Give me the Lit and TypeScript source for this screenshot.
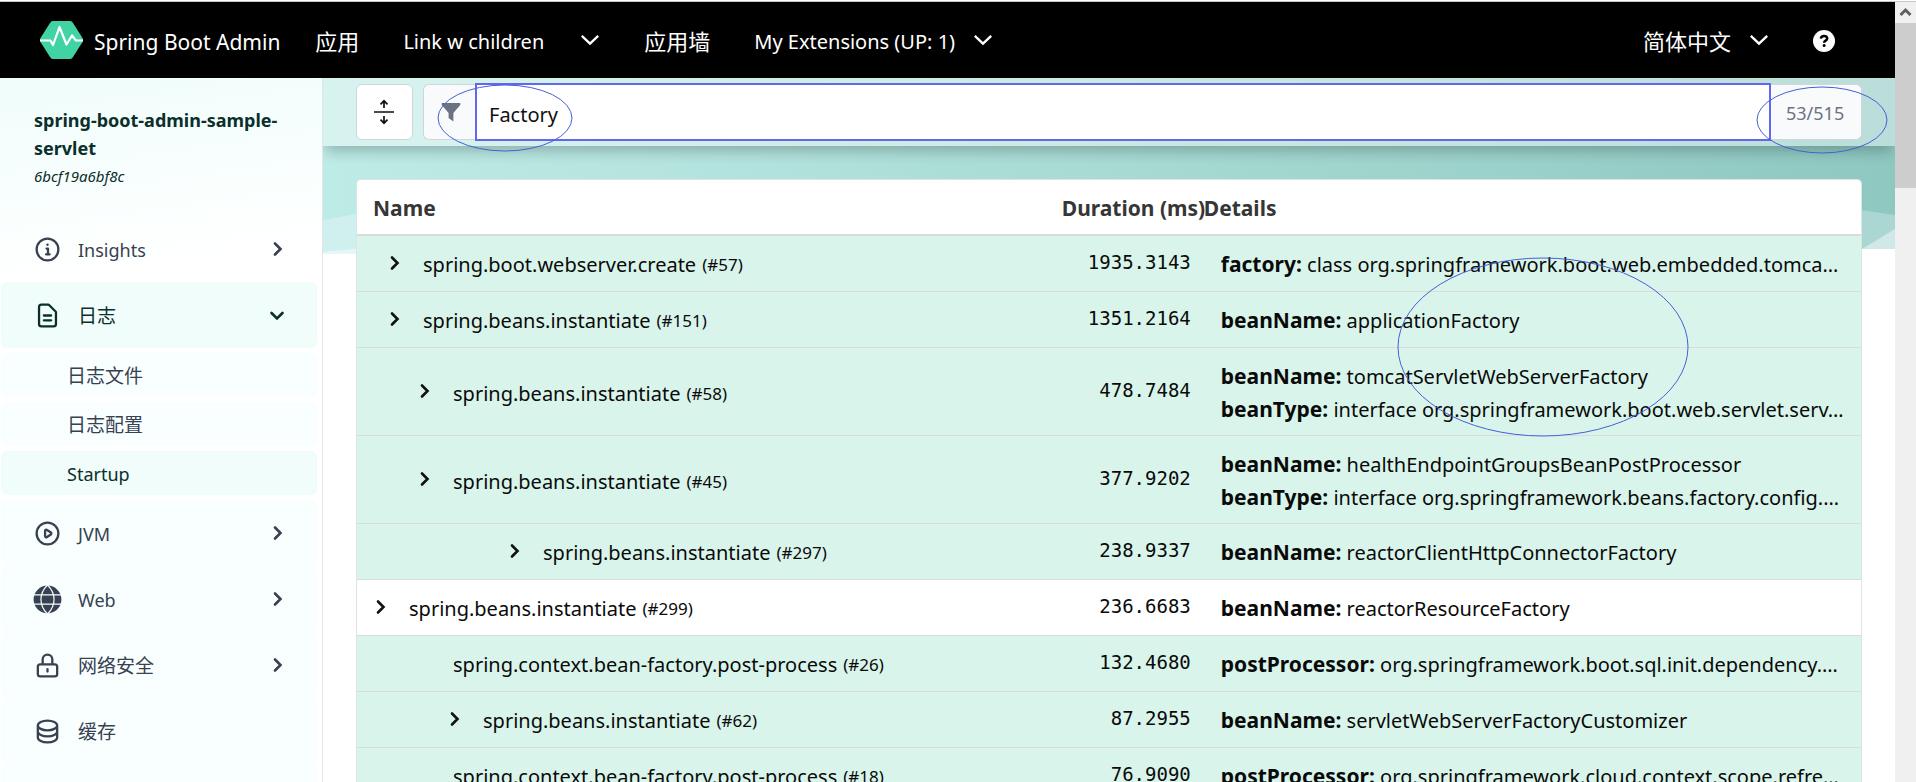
import { LitElement, html, css, svg, nothing } from "lit";
import { customElement, property, state } from "lit/decorators.js";
import { classMap } from "lit/directives/class-map.js";
import { styleMap } from "lit/directives/style-map.js";

interface Detail { key: string; value: string; }
interface Step {
  id: number; name: string; duration: string; indent: number;
  leaf?: boolean; plain?: boolean; details: Detail[];
}

const STEPS: Step[] = [
  { id: 57, name: "spring.boot.webserver.create", duration: "1935.3143", indent: 14,
    details: [{ key: "factory", value: "class org.springframework.boot.web.embedded.tomca…" }] },
  { id: 151, name: "spring.beans.instantiate", duration: "1351.2164", indent: 14,
    details: [{ key: "beanName", value: "applicationFactory" }] },
  { id: 58, name: "spring.beans.instantiate", duration: "478.7484", indent: 44,
    details: [{ key: "beanName", value: "tomcatServletWebServerFactory" },
      { key: "beanType", value: "interface org.springframework.boot.web.servlet.serv…" }] },
  { id: 45, name: "spring.beans.instantiate", duration: "377.9202", indent: 44,
    details: [{ key: "beanName", value: "healthEndpointGroupsBeanPostProcessor" },
      { key: "beanType", value: "interface org.springframework.beans.factory.config.…" }] },
  { id: 297, name: "spring.beans.instantiate", duration: "238.9337", indent: 134,
    details: [{ key: "beanName", value: "reactorClientHttpConnectorFactory" }] },
  { id: 299, name: "spring.beans.instantiate", duration: "236.6683", indent: 0, plain: true,
    details: [{ key: "beanName", value: "reactorResourceFactory" }] },
  { id: 26, name: "spring.context.bean-factory.post-process", duration: "132.4680", indent: 79, leaf: true,
    details: [{ key: "postProcessor", value: "org.springframework.boot.sql.init.dependency.…" }] },
  { id: 62, name: "spring.beans.instantiate", duration: "87.2955", indent: 74,
    details: [{ key: "beanName", value: "servletWebServerFactoryCustomizer" }] },
  { id: 18, name: "spring.context.bean-factory.post-process", duration: "76.9090", indent: 79, leaf: true,
    details: [{ key: "postProcessor", value: "org.springframework.cloud.context.scope.refre…" }] },
];

const chevron = html`<svg class="chev" viewBox="0 0 20 20" aria-hidden="true"><path d="M7 4.5 12.5 10 7 15.5" /></svg>`;
const caret = html`<svg class="caret" viewBox="0 0 22 12" aria-hidden="true"><path d="M2 1.5 11 10 20 1.5" /></svg>`;

const icons: Record<string, unknown> = {
  info: svg`<circle cx="12" cy="12" r="9"/><path d="M11.2 11.2h1.2v4.8M10.8 16h3"/><circle class="fill" cx="12" cy="8" r="1"/>`,
  doc: svg`<path d="M9 12h6m-6 4h6m2 5H7a2 2 0 01-2-2V5a2 2 0 012-2h5.6a1 1 0 01.7.3l5.4 5.4a1 1 0 01.3.7V19a2 2 0 01-2 2z"/>`,
  play: svg`<circle cx="12" cy="12" r="9"/><path d="M14.8 11.2l-3.2-2.1A1 1 0 0010 9.9v4.2a1 1 0 001.6.8l3.2-2.1a1 1 0 000-1.6z"/>`,
  globe: svg`<circle class="fill" cx="12" cy="12" r="11.5"/><path class="cut" d="M0 8.2h24M0 15.8h24M12 0c-7.2 7-7.2 17 0 24M12 0c7.2 7 7.2 17 0 24"/>`,
  lock: svg`<path d="M12 15v2m-6 4h12a2 2 0 002-2v-6a2 2 0 00-2-2H6a2 2 0 00-2 2v6a2 2 0 002 2zm10-10V7a4 4 0 00-8 0v4h8z"/>`,
  db: svg`<path d="M4 7v10c0 2.2 3.6 4 8 4s8-1.8 8-4V7M4 7c0 2.2 3.6 4 8 4s8-1.8 8-4M4 7c0-2.2 3.6-4 8-4s8 1.8 8 4m0 5c0 2.2-3.6 4-8 4s-8-1.8-8-4"/>`,
};

const FONT = css`"Noto Sans", "Noto Sans CJK SC", sans-serif`;

@customElement("sba-navbar")
class SbaNavbar extends LitElement {
  static styles = css`
    :host { display: block; background: #000; color: #fff; font: 20px/32px ${FONT}; }
    nav { display: flex; align-items: center; height: 76px; padding: 0 57px 0 40px; }
    a, button { color: inherit; font: inherit; text-decoration: none; background: none; border: 0; padding: 0; display: flex; align-items: center; white-space: nowrap; }
    span { padding-top: 3px; }
    .brand { gap: 11px; margin-right: 35px; font-size: 21px; }
    .logo { width: 43px; height: 40px; }
    .item { margin-right: 44px; }
    .zh { font-size: 22px; }
    .zh span { padding-top: 1px; }
    .wide { gap: 36px; }
    .near { gap: 18px; }
    .right { display: flex; align-items: center; margin-left: auto; gap: 41px; }
    .caret { width: 20px; height: 12px; fill: none; stroke: #fff; stroke-width: 2.6; }
    .help { width: 28px; height: 28px; }
  `;
  render() {
    return html`<nav>
      <a class="brand" href="#">
        <svg class="logo" viewBox="0 0 43 40" aria-hidden="true">
          <path fill="#42d3a5" d="M13 1h17q2 0 3 2l9.5 15q1 2 0 4l-9.5 15q-1 2-3 2H13q-2 0-3-2L.5 22q-1-2 0-4L10 3q1-2 3-2z"/>
          <path fill="none" stroke="#fff" stroke-width="2.2" stroke-linejoin="round" d="M0 20.5h10.5l2.5 4.5 6.5-18 7 17.5 5.5-9 4 5h7"/>
        </svg>
        <span>Spring Boot Admin</span></a>
      <a class="item zh" href="#"><span>应用</span></a>
      <button class="item wide"><span>Link w children</span>${caret}</button>
      <a class="item zh" href="#"><span>应用墙</span></a>
      <button class="item near"><span>My Extensions (UP: 1)</span>${caret}</button>
      <div class="right">
        <button class="near zh"><span>简体中文</span>${caret}</button>
        <button aria-label="Help"><svg class="help" viewBox="0 0 28 28" aria-hidden="true">
          <circle cx="14" cy="15" r="11" fill="#fff"/>
          <path d="M10.8 12.6c.3-2 1.5-2.7 3.2-2.7 1.9 0 3.2 1 3.2 2.6 0 2.2-3.1 2.1-3.1 4.2" fill="none" stroke="#000" stroke-width="2.5"/>
          <circle cx="14.1" cy="19.6" r="1.5"/></svg></button>
      </div>
    </nav>`;
  }
}

@customElement("sba-sidebar")
class SbaSidebar extends LitElement {
  static styles = css`
    :host { display: block; box-sizing: border-box; overflow: hidden; border-right: 1px solid #e2e6ea; color: #374151; font: 18px/28px ${FONT};
      background: linear-gradient(172deg, #f0fdfa 0, #f6fefd 90px, #fff 210px); }
    .app { display: block; padding: 28px 28px 26px 34px; color: #0b2f2b; text-decoration: none; }
    .app strong { display: block; }
    .app em { display: block; font-size: 15px; }
    ul { list-style: none; margin: 0; padding: 0 5px 0 1px; }
    .link { display: flex; align-items: center; box-sizing: border-box; height: 66px; padding: 0 30px 0 32px; gap: 16px; border-radius: 6px; background: #f8fffe; color: inherit; text-decoration: none; }
    .link.plain { background: none; }
    .link span { flex: 1; padding-top: 2px; }
    .link.open, .sub.current { background: #f0fdfa; color: #0b2f2b; }
    .zh { font-size: 19px; }
    .sub { display: flex; align-items: center; box-sizing: border-box; height: 44px; margin: 5px 0; padding: 1px 0 0 66px; border-radius: 6px; background: #f8fffe; color: inherit; text-decoration: none; }
    .icon { width: 29px; height: 29px; fill: none; stroke: currentColor; stroke-width: 1.9; stroke-linecap: round; stroke-linejoin: round; }
    .icon .fill { fill: currentColor; stroke: none; }
    .icon .cut { stroke: #f8fffe; stroke-width: 1; }
    .chev { width: 20px; height: 20px; fill: none; stroke: currentColor; stroke-width: 2.6; stroke-linecap: round; }
    .down { transform: rotate(90deg); }
  `;
  private entry(icon: string, label: string, arrow = true, kind = "") {
    return html`<a class="link ${kind}" href="#"><svg class="icon" viewBox="0 0 24 24" aria-hidden="true">${icons[icon]}</svg><span>${label}</span>${
      arrow ? html`<svg class=${kind.includes("open") ? "chev down" : "chev"} viewBox="0 0 20 20" aria-hidden="true"><path d="M8 4.5 13.5 10 8 15.5"/></svg>` : nothing}</a>`;
  }
  render() {
    return html`
      <a class="app" href="#"><strong>spring-boot-admin-sample-servlet</strong><em>6bcf19a6bf8c</em></a>
      <ul>
        <li>${this.entry("info", "Insights", true, "plain")}</li>
        <li>${this.entry("doc", "日志", true, "open zh")}
          <a class="sub zh" href="#">日志文件</a>
          <a class="sub zh" href="#">日志配置</a>
          <a class="sub current" href="#">Startup</a></li>
        <li>${this.entry("play", "JVM")}</li>
        <li>${this.entry("globe", "Web")}</li>
        <li>${this.entry("lock", "网络安全", true, "zh")}</li>
        <li>${this.entry("db", "缓存", false, "zh")}</li>
        <li class="link"></li>
      </ul>`;
  }
}

@customElement("sba-filter-bar")
class SbaFilterBar extends LitElement {
  @state() private query = "Factory";
  static styles = css`
    :host { display: flex; gap: 10px; padding: 5px 33px; font: 20px/32px ${FONT};
      background: rgba(255, 255, 255, .4); box-shadow: 0 8px 13px -3px rgba(0, 0, 0, .24); }
    .expand { width: 57px; height: 56px; margin: 1px 0; padding: 0 2px 0 0; display: grid; place-items: center; background: #fff; border: 1px solid #d1d5db; border-radius: 6px; }
    .expand svg { width: 24px; height: 28px; fill: none; stroke: #111; stroke-width: 1.7; }
    .group { flex: 1; display: flex; align-items: center; }
    .addon { box-sizing: border-box; display: flex; align-items: center; height: 56px; border: 1px solid #d1d5db; background: #f9fafb; color: #6b7280; }
    .addon.left { width: 52px; padding-left: 17px; border-radius: 6px 0 0 6px; border-right: 0; }
    .addon.right { width: 91px; padding: 2px 0 0 15px; font-size: 18px; border-radius: 0 6px 6px 0; border-left: 0; }
    .addon svg { width: 20px; height: 20px; fill: #6b7280; }
    input { flex: 1; min-width: 0; box-sizing: border-box; height: 58px; padding: 4px 12px 0; border: 2px solid #6366f1; background: #fff; color: #111; font: inherit; outline: 0; }
  `;
  render() {
    return html`
      <button class="expand" aria-label="Expand all"><svg viewBox="0 0 24 28" aria-hidden="true"><path d="M2 14h20M12 10V3M8.5 6.3 12 2.8l3.5 3.5M12 18v7M8.5 21.7l3.5 3.5 3.5-3.5"/></svg></button>
      <div class="group">
        <label class="addon left" for="filter" aria-label="Filter"><svg viewBox="0 0 20 20" aria-hidden="true"><path d="M1 1h18q1 1 0 2.2L12.4 11v8.5L7.6 16v-5L1 3.2Q0 2 1 1z"/></svg></label>
        <input id="filter" type="text" .value=${this.query} @input=${(e: Event) => (this.query = (e.target as HTMLInputElement).value)}>
        <span class="addon right">53/515</span>
      </div>`;
  }
}

@customElement("sba-startup-table")
class SbaStartupTable extends LitElement {
  @property({ attribute: false }) steps: Step[] = [];
  static styles = css`
    :host { display: block; border: 1px solid #dbe5e5; border-bottom: 0; border-radius: 5px 5px 0 0; background: #fff; overflow: hidden; font: 20px/33px ${FONT}; color: #0a0a0a; }
    table { width: 100%; table-layout: fixed; border-collapse: separate; border-spacing: 0; }
    .c-duration { width: 142px; }
    .c-details { width: 43.7%; }
    th { height: 52px; padding: 2px 0 0; text-align: left; color: #363636; border-bottom: 2px solid #dbdbdb; white-space: nowrap; line-height: 32px; font-size: 21px; }
    th:first-child { padding-left: 16px; }
    .num { text-align: right; }
    td { padding: 12px 10px 10px 17px; border-bottom: 1px solid #dbdbdb; background: #d9f5eb; }
    .multi td { padding-bottom: 9px; }
    .plain td { background: #fff; }
    td.num, .multi td.num { padding: 9px 13px 12px 0; font: 19px/32px "DejaVu Sans Mono", monospace; }
    .name { display: flex; align-items: center; white-space: nowrap; }
    .toggle { width: 35px; height: 20px; margin-bottom: 4px; padding: 0; border: 0; background: none; display: flex; flex: none; }
    .chev { width: 20px; height: 20px; margin-left: -3px; fill: none; stroke: #111; stroke-width: 2.6; stroke-linecap: round; }
    small { font-size: 17px; margin-left: 6px; }
    b { font-size: 21px; }
    .line { height: 33px; overflow: hidden; text-overflow: ellipsis; white-space: nowrap; }
  `;
  render() {
    return html`<table>
      <colgroup><col><col class="c-duration"><col class="c-details"></colgroup>
      <thead><tr><th>Name</th><th class="num">Duration (ms)</th><th>Details</th></tr></thead>
      <tbody>${this.steps.map((s) => html`<tr class=${classMap({ plain: !!s.plain, multi: s.details.length > 1 })}>
        <td><div class="name" style=${styleMap({ paddingLeft: s.indent + "px" })}>${s.leaf ? nothing : html`<button class="toggle" aria-label="Expand">${chevron}</button>`}<span>${s.name}</span><small>(#${s.id})</small></div></td>
        <td class="num">${s.duration}</td>
        <td>${s.details.map((d) => html`<div class="line"><b>${d.key}:</b> ${d.value}</div>`)}</td>
      </tr>`)}</tbody>
    </table>`;
  }
}

@customElement("app-root")
class AppRoot extends LitElement {
  static styles = css`
    :host { display: flex; flex-direction: column; position: relative; height: 100vh; overflow: hidden; background: #fff; }
    .edge { flex: none; height: 1px; border-bottom: 1px solid #c4c8c8; }
    .window { flex: 1; min-height: 0; display: flex; }
    .page { flex: 1; min-width: 0; display: flex; flex-direction: column; }
    .body { flex: 1; min-height: 0; display: flex; }
    sba-sidebar { width: 323px; flex: none; }
    main { position: relative; flex: 1; min-width: 0; overflow: hidden; }
    .backdrop { position: absolute; top: 0; left: 0; width: 100%; height: 176px; }
    sba-filter-bar { position: relative; }
    .content { position: relative; padding: 33px 33px 0; }
    .scroll { width: 21px; flex: none; background: #f0f0f0; display: flex; flex-direction: column; }
    .scroll svg { width: 21px; height: 21px; fill: none; stroke: #606060; stroke-width: 3; }
    .thumb { height: 165px; background: #cdcdcd; }
    .marks { position: absolute; top: 0; left: 0; width: 100%; height: 100%; fill: none; stroke: #4560d6; stroke-width: 1; pointer-events: none; }
  `;
  render() {
    return html`
      <div class="edge"></div>
      <div class="window">
        <div class="page">
          <sba-navbar></sba-navbar>
          <div class="body">
            <sba-sidebar></sba-sidebar>
            <main>
              <svg class="backdrop" viewBox="0 0 1572 176" preserveAspectRatio="none" aria-hidden="true">
                <defs><linearGradient id="sky"><stop offset="0" stop-color="#bdebe6"/><stop offset=".2" stop-color="#b6e5e0"/><stop offset=".6" stop-color="#a2d7cf"/><stop offset="1" stop-color="#8ec8c1"/></linearGradient></defs>
                <path fill="url(#sky)" d="M0 0H1572V152H0z"/>
                <path fill="#cff0ee" d="M0 142 60 131V171L0 174z"/>
                <path fill="#e6f7f6" d="M0 174 60 168V176H0z"/>
                <path fill="#aad7d2" d="M1530 131 1572 137V171H1530z"/>
                <path fill="#d0e9e6" d="M1539 171 1572 151V171z"/>
              </svg>
              <sba-filter-bar></sba-filter-bar>
              <div class="content"><sba-startup-table .steps=${STEPS}></sba-startup-table></div>
            </main>
          </div>
        </div>
        <div class="scroll" aria-hidden="true"><svg viewBox="0 0 21 21"><path d="M5.5 13 10.5 8l5 5"/></svg><div class="thumb"></div></div>
      </div>
      <svg class="marks" aria-hidden="true">
        <ellipse cx="505" cy="118" rx="67" ry="33"/>
        <ellipse cx="1822" cy="120" rx="65" ry="33"/>
        <ellipse cx="1543" cy="347" rx="145" ry="89"/>
      </svg>`;
  }
}
